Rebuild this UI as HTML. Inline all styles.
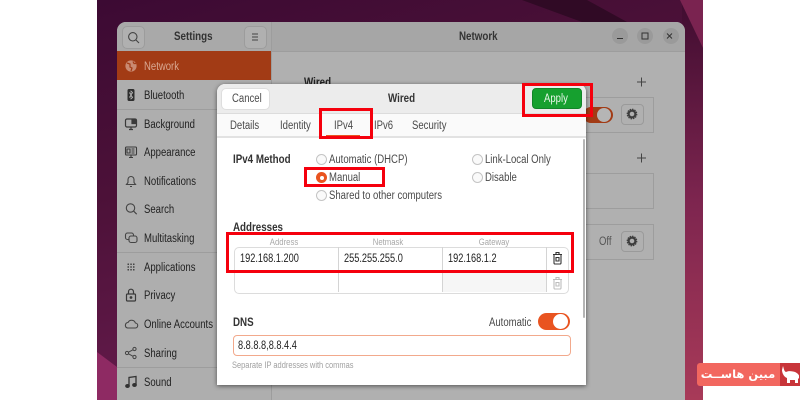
<!DOCTYPE html>
<html><head><meta charset="utf-8">
<style>
html,body{margin:0;padding:0;width:800px;height:400px;overflow:hidden;background:#fff}
body{position:relative;font-family:"Liberation Sans","DejaVu Sans",sans-serif;font-size:11.5px;color:#222;filter:blur(.3px)}
div,span,svg{position:absolute}
.t{white-space:nowrap;line-height:14px;height:14px;transform:scaleX(.83);transform-origin:0 50%;margin-top:.5px}
.n{transform:scaleX(.8)}
.b{font-weight:bold;transform:scaleX(.85)}
#wall{left:97px;top:0;width:606px;height:400px;overflow:hidden;background:linear-gradient(165deg,#3c0a33 0%,#4c1138 35%,#651b4c 75%,#7a2259 100%)}
#win{left:20px;top:22px;width:568px;height:378px;background:#b0b0b0;border-radius:9px 9px 0 0;overflow:hidden}
.side .t{left:27px}
.ln{background:#9d9d9d}
#dlg{left:217px;top:84px;width:369px;height:301px;background:#fff;border-radius:8px 8px 0 0;box-shadow:0 1px 5px rgba(0,0,0,.55);overflow:hidden}
.r{width:9px;height:9px;border:1px solid #c4c4c4;border-radius:50%;background:#fafafa}
.red{border:3.5px solid #f5000d;box-sizing:border-box}
.g{color:#4a4a4a}
.hd{color:#a8a8a8;font-size:9px;transform:translateX(-50%) scaleX(.86);transform-origin:50% 50%}
</style></head><body>
<div id="wall">
<svg style="left:0;top:0" width="606" height="400" viewBox="0 0 606 400">
<defs><linearGradient id="rg" x1="0" y1="0" x2="0" y2="1"><stop offset="0" stop-color="#3f0c30"/><stop offset=".5" stop-color="#7d254f"/><stop offset="1" stop-color="#a83a58"/></linearGradient></defs>
<path d="M585 0H606V400H585Z" fill="url(#rg)"/>
<path d="M583 0H606V48Z" fill="#7a2350"/>
<path d="M425 0L485 22H530L490 0Z" fill="#300a25"/>
<path d="M0 352L20 367V400H0Z" fill="#8e2a63"/>
</svg>
<div id="win">
 <div style="left:0;top:0;width:154px;height:29px;background:#a9a9a9"></div>
 <div style="left:155px;top:0;width:413px;height:29px;background:#a6a6a6"></div>
 <div class="ln" style="left:0;top:29px;width:568px;height:1px"></div>
 <div style="left:0;top:30px;width:154px;height:348px;background:#aeaeae"></div>
 <div class="ln" style="left:154px;top:0;width:1px;height:378px"></div>
 <div style="left:0;top:29px;width:154px;height:29px;background:#a23b15"></div>
 <div style="left:5px;top:4px;width:21px;height:21px;background:#b0b0b0;border:1px solid #9c9c9c;border-radius:5px"></div>
 <svg style="left:10px;top:9px" width="13" height="13" viewBox="0 0 13 13" fill="none" stroke="#444" stroke-width="1.1"><circle cx="5.8" cy="5.8" r="4.2"/><path d="M9 9l3 3"/></svg>
 <div style="left:127px;top:4px;width:21px;height:21px;background:#b0b0b0;border:1px solid #9c9c9c;border-radius:5px"></div>
 <svg style="left:133px;top:10px" width="10" height="10" viewBox="0 0 10 10" stroke="#444" stroke-width="1"><path d="M2 2h6M2 5h6M2 8h6"/></svg>
 <div class="t b" style="left:57px;top:7px;color:#333">Settings</div>
 <div class="t b" style="left:342px;top:7px;color:#333">Network</div>
 <div style="left:495px;top:6px;width:16px;height:16px;border-radius:50%;background:#9a9a9a"></div>
 <div style="left:520px;top:6px;width:16px;height:16px;border-radius:50%;background:#9a9a9a"></div>
 <div style="left:546px;top:6px;width:16px;height:16px;border-radius:50%;background:#9a9a9a"></div>
 <svg style="left:495px;top:6px" width="68" height="16" viewBox="0 0 68 16" fill="none" stroke="#333" stroke-width="1"><path d="M5 10.5h6"/><rect x="30" y="5" width="6" height="6"/><path d="M55 5.5l5 5M60 5.5l-5 5"/></svg>
 <div class="side">
  <svg style="left:6px;top:36px" width="16" height="16" viewBox="0 0 16 16"><circle cx="8" cy="8" r="5.6" fill="#c98a72"/><path d="M4 5l3 1 0 3 2 1-1 3M10 3.500l1 2 2 0" fill="none" stroke="#a23b15" stroke-width="1.200"/></svg>
  <div class="t" style="top:37px;color:#d9a892">Network</div>
  <svg style="left:6px;top:65px" width="16" height="16" viewBox="0 0 16 16"><rect x="4.500" y="2" width="7" height="12" rx="1.500" fill="#2e2e2e"/><path d="M6.300 5.500L9.700 10.500 8 12V4L9.700 5.500 6.300 10.500" fill="none" stroke="#bbb" stroke-width=".7"/></svg>
  <div class="t" style="top:66px">Bluetooth</div>
  <div class="ln" style="left:0;top:87px;width:154px;height:1px"></div>
  <svg style="left:6px;top:94px" width="16" height="16" viewBox="0 0 16 16" fill="none" stroke="#3a3a3a" stroke-width="1.200"><rect x="2.500" y="3" width="11" height="8" rx="1.500"/><path d="M6 13.500h4M8 11v2"/><path d="M9 3.500h4v4H9z" fill="#3a3a3a"/></svg>
  <div class="t" style="top:95px">Background</div>
  <svg style="left:6px;top:122px" width="16" height="16" viewBox="0 0 16 16" fill="none" stroke="#3a3a3a" stroke-width="1.100"><rect x="2.500" y="3" width="11" height="8" rx="1"/><path d="M6 13.500h4M8 11v2M4 5h3v4H4zM8.500 5h3M8.500 7h3M8.500 9h3"/></svg>
  <div class="t" style="top:123px">Appearance</div>
  <svg style="left:6px;top:151px" width="16" height="16" viewBox="0 0 16 16" fill="none" stroke="#444" stroke-width="1.100"><path d="M3.500 11.500h9l-1.500-2V6.500a3 3 0 0 0-6 0v3zM7 13.500h2"/></svg>
  <div class="t" style="top:152px">Notifications</div>
  <svg style="left:6px;top:179px" width="16" height="16" viewBox="0 0 16 16" fill="none" stroke="#444" stroke-width="1.100"><circle cx="7.500" cy="7" r="4.200"/><path d="M10.700 10.200l3 3"/></svg>
  <div class="t" style="top:180px">Search</div>
  <svg style="left:6px;top:208px" width="16" height="16" viewBox="0 0 16 16" fill="none" stroke="#444" stroke-width="1.100"><rect x="2.500" y="3" width="8" height="6.500" rx="2"/><rect x="6" y="6" width="8" height="6.500" rx="2" fill="#aeaeae"/></svg>
  <div class="t" style="top:209px">Multitasking</div>
  <div class="ln" style="left:0;top:230px;width:154px;height:1px"></div>
  <svg style="left:6px;top:237px" width="16" height="16" viewBox="0 0 16 16" fill="#444"><path d="M4.500 4.500h1.500v1.500H4.500zM7.300 4.500h1.500v1.500H7.300zM10 4.500h1.500v1.500H10zM4.500 7.300h1.500v1.500H4.500zM7.300 7.300h1.500v1.500H7.300zM10 7.300h1.500v1.500H10zM4.500 10h1.500v1.500H4.500zM7.300 10h1.500v1.500H7.300zM10 10h1.500v1.500H10z"/></svg>
  <div class="t" style="top:238px">Applications</div>
  <svg style="left:6px;top:265px" width="16" height="16" viewBox="0 0 16 16" fill="none" stroke="#3a3a3a" stroke-width="1.200"><rect x="3.500" y="7" width="9" height="7" rx="1"/><path d="M5.500 7V4.700a2.500 2.500 0 0 1 5 0V7"/><circle cx="8" cy="10.500" r=".8" fill="#3a3a3a"/></svg>
  <div class="t" style="top:266px">Privacy</div>
  <svg style="left:6px;top:294px" width="16" height="16" viewBox="0 0 16 16" fill="none" stroke="#444" stroke-width="1.100"><path d="M4.500 12h7.500a2.500 2.500 0 0 0 .4-5A4 4 0 0 0 5 6.500 2.800 2.800 0 0 0 4.500 12z"/></svg>
  <div class="t" style="top:295px">Online Accounts</div>
  <svg style="left:6px;top:323px" width="16" height="16" viewBox="0 0 16 16" fill="none" stroke="#444" stroke-width="1"><circle cx="4" cy="8" r="1.600"/><circle cx="11.500" cy="4" r="1.600"/><circle cx="11.500" cy="12" r="1.600"/><path d="M5.500 7.200l4.600-2.500M5.500 8.800l4.600 2.500"/></svg>
  <div class="t" style="top:324px">Sharing</div>
  <div class="ln" style="left:0;top:345px;width:154px;height:1px"></div>
  <svg style="left:6px;top:352px" width="16" height="16" viewBox="0 0 16 16" fill="none" stroke="#333" stroke-width="1.300"><path d="M6 12V3.500l7-1V11"/><ellipse cx="4.500" cy="12" rx="1.700" ry="1.400" fill="#333"/><ellipse cx="11.500" cy="11" rx="1.700" ry="1.400" fill="#333"/></svg>
  <div class="t" style="top:353px">Sound</div>
 </div>
 <div class="t b" style="left:187px;top:53px">Wired</div>
 <svg style="left:519px;top:54px" width="12" height="12" stroke="#444"><path d="M1 6h9M5.500 1.500v9"/></svg>
 <svg style="left:519px;top:130px" width="12" height="12" stroke="#444"><path d="M1 6h9M5.500 1.500v9"/></svg>
 <div style="left:440px;top:75px;width:95px;height:34px;border:1px solid #9d9d9d"></div>
 <div style="left:440px;top:151px;width:95px;height:34px;border:1px solid #9d9d9d"></div>
 <div style="left:440px;top:202px;width:95px;height:34px;border:1px solid #9d9d9d"></div>
 <div style="left:466px;top:85px;width:30px;height:16px;background:#a23b15;border-radius:9px"></div>
 <div style="left:480px;top:86px;width:14px;height:14px;background:#b5b5b5;border-radius:50%"></div>
 <div style="left:504px;top:82px;width:21px;height:19px;border:1px solid #9a9a9a;border-radius:4px"></div>
 <div style="left:504px;top:209px;width:21px;height:19px;border:1px solid #9a9a9a;border-radius:4px"></div>
 <svg style="left:509px;top:86px" width="12" height="12" viewBox="0 0 12 12" fill="none" stroke="#3d3d3d" stroke-width="2.200"><circle cx="6" cy="6" r="3.400"/><circle cx="6" cy="6" r="4.800" stroke-width="1.100" stroke-dasharray="1.500 1"/></svg>
 <svg style="left:509px;top:213px" width="12" height="12" viewBox="0 0 12 12" fill="none" stroke="#3d3d3d" stroke-width="2.200"><circle cx="6" cy="6" r="3.400"/><circle cx="6" cy="6" r="4.800" stroke-width="1.100" stroke-dasharray="1.500 1"/></svg>
 <div class="t" style="left:482px;top:212px;color:#555">Off</div>
</div>
</div>

<div id="dlg">
 <div style="left:0;top:0;width:369px;height:29px;background:#ececec;border-bottom:1px solid #dcdcdc"></div>
 <div style="left:4px;top:4px;width:47px;height:20px;background:#fff;border:1px solid #dedede;border-radius:5px"></div>
 <div class="t g" style="left:15px;top:7px">Cancel</div>
 <div class="t b" style="left:171px;top:7px;color:#333">Wired</div>
 <div style="left:0;top:30px;width:369px;height:22px;background:#fafafa;border-bottom:2px solid #e2e2e2"></div>
 <div class="t g" style="left:13px;top:34px">Details</div>
 <div class="t g" style="left:63px;top:34px">Identity</div>
 <div class="t g" style="left:117px;top:34px">IPv4</div>
 <div class="t g" style="left:157px;top:34px">IPv6</div>
 <div class="t g" style="left:195px;top:34px">Security</div>
 <div style="left:109px;top:51px;width:34px;height:2px;background:#e95420"></div>
 <div class="t b" style="left:16px;top:68px;color:#333">IPv4 Method</div>
 <div class="r" style="left:99px;top:70px"></div>
 <div class="t g" style="left:112px;top:68px">Automatic (DHCP)</div>
 <div style="left:99px;top:88px;width:11px;height:11px;background:#e95420;border-radius:50%"></div>
 <div style="left:102.500px;top:91.500px;width:4px;height:4px;background:#fff;border-radius:50%"></div>
 <div class="t g" style="left:112px;top:86px">Manual</div>
 <div class="r" style="left:99px;top:106px"></div>
 <div class="t g" style="left:112px;top:104px">Shared to other computers</div>
 <div class="r" style="left:255px;top:70px"></div>
 <div class="t g" style="left:268px;top:68px">Link-Local Only</div>
 <div class="r" style="left:255px;top:88px"></div>
 <div class="t g" style="left:268px;top:86px">Disable</div>
 <div class="t b" style="left:16px;top:136px;color:#333">Addresses</div>
 <div class="t hd" style="left:67px;top:150px">Address</div>
 <div class="t hd" style="left:171px;top:150px">Netmask</div>
 <div class="t hd" style="left:277px;top:150px">Gateway</div>
 <div style="left:16.500px;top:163px;width:333px;height:45px;border:1px solid #dcdcdc;border-radius:5px"></div>
 <div style="left:226px;top:189px;width:103px;height:19px;background:#f6f6f6"></div>
 <div style="left:17px;top:186px;width:333px;height:1px;background:#e6e6e6"></div>
 <div style="left:121px;top:163px;width:1px;height:45px;background:#d4d4d4"></div>
 <div style="left:225px;top:163px;width:1px;height:45px;background:#d4d4d4"></div>
 <div style="left:329px;top:163px;width:1px;height:45px;background:#d4d4d4"></div>
 <div class="t n" style="left:23px;top:167px">192.168.1.200</div>
 <div class="t n" style="left:127px;top:167px">255.255.255.0</div>
 <div class="t n" style="left:231px;top:167px">192.168.1.2</div>
 <svg style="left:334px;top:167px" width="13" height="14" viewBox="0 0 13 14" fill="none" stroke="#333" stroke-width="1.100"><path d="M2 3.500h9M5 3V1.500h3V3M3 3.500v8.500a1 1 0 0 0 1 1h5a1 1 0 0 0 1-1V3.500M5 6.500h3v3.500H5z"/></svg>
 <svg style="left:334px;top:192px" width="13" height="14" viewBox="0 0 13 14" fill="none" stroke="#bdbdbd" stroke-width="1.100"><path d="M2 3.500h9M5 3V1.500h3V3M3 3.500v8.500a1 1 0 0 0 1 1h5a1 1 0 0 0 1-1V3.500M5 6.500h3v3.500H5z"/></svg>
 <div class="t b" style="left:16px;top:231px;color:#333">DNS</div>
 <div class="t g" style="left:272px;top:231px">Automatic</div>
 <div style="left:321px;top:229px;width:32px;height:17px;background:#e95420;border-radius:9px"></div>
 <div style="left:336px;top:230px;width:15px;height:15px;background:#fff;border-radius:50%"></div>
 <div style="left:15.500px;top:251px;width:336px;height:19px;border:1px solid #f2a98c;border-radius:4px"></div>
 <div class="t n" style="left:21px;top:254px">8.8.8.8,8.8.4.4</div>
 <div class="t" style="left:15px;top:273px;font-size:9px;color:#a0a0a0">Separate IP addresses with commas</div>
 <div style="left:366px;top:55px;width:2px;height:179px;background:#b5b5b5;border-radius:1px"></div>
</div>

<div style="left:532px;top:88px;width:50px;height:21px;background:#16a02f;border:1px solid #118528;box-sizing:border-box;border-radius:4px"></div>
<div class="t" style="left:544px;top:91px;color:#eaf6ea">Apply</div>

<div class="red" style="left:319px;top:108px;width:54px;height:31px"></div>
<div class="red" style="left:304px;top:167px;width:81px;height:20px"></div>
<div class="red" style="left:226px;top:232px;width:348px;height:41px"></div>
<div class="red" style="left:522px;top:83px;width:71px;height:34px"></div>

<div style="left:697px;top:363px;width:103px;height:23px;background:#f2675f;border-radius:3px 0 0 3px"></div>
<div style="left:780px;top:363px;width:20px;height:23px;background:#c8353a"></div>
<div class="t" dir="rtl" style="left:700px;top:366px;width:76px;height:17px;line-height:17px;font-family:'DejaVu Sans',sans-serif;font-weight:bold;font-size:11.500px;color:#fff;text-align:center;transform:none;margin:0">مبین هاســت</div>
<svg style="left:781px;top:365px" width="19" height="20" viewBox="0 0 19 20" fill="#fff"><path d="M2 1c1 3 1 5 3 6 2-1 4-1 7-.500 3 .500 5 2 6 4v3l-1 0V18h-3v-3H9v3H6v-5C3 12 1 8 1 5z"/></svg>
</body></html>
